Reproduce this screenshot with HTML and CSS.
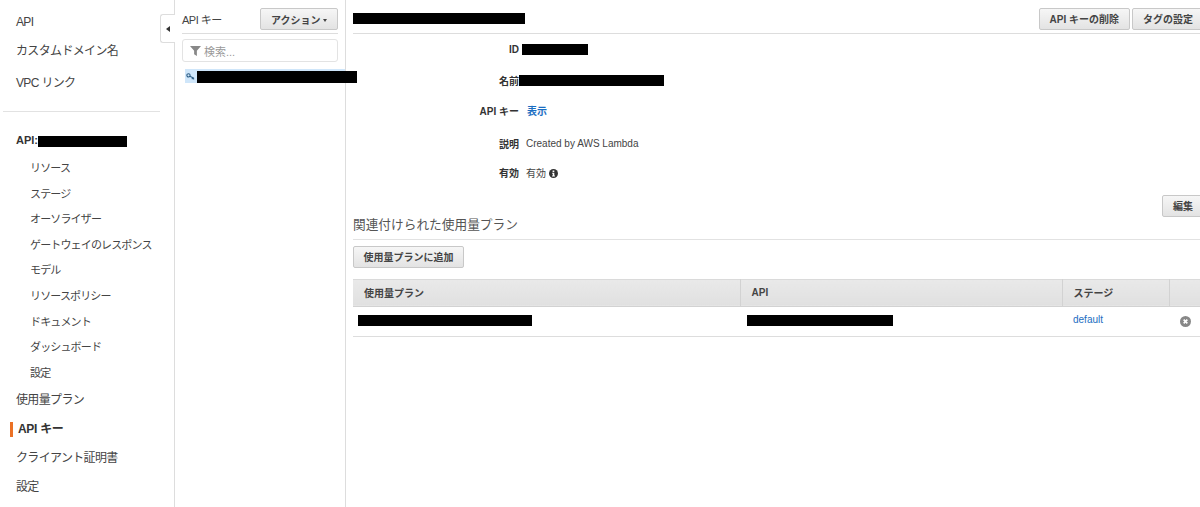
FILE: index.html
```html
<!DOCTYPE html>
<html lang="ja">
<head>
    <meta charset="UTF-8">
    <title>API キー</title>
    <link rel="stylesheet" href="styles.css">
</head>
<body>
    <nav class="sidebar">
        <ul class="nav-top">
            <li>API</li>
            <li>カスタムドメイン名</li>
            <li>VPC リンク</li>
        </ul>
        <hr class="nav-rule">
        <div class="api-name">API:<span class="redact api-redact"></span></div>
        <ul class="nav-sub">
            <li>リソース</li>
            <li>ステージ</li>
            <li>オーソライザー</li>
            <li>ゲートウェイのレスポンス</li>
            <li>モデル</li>
            <li>リソースポリシー</li>
            <li>ドキュメント</li>
            <li>ダッシュボード</li>
            <li>設定</li>
        </ul>
        <ul class="nav-bottom">
            <li>使用量プラン</li>
            <li class="active">API キー</li>
            <li>クライアント証明書</li>
            <li>設定</li>
        </ul>
    </nav>

    <section class="keys">
        <div class="collapse-tab"><span class="arrow-left"></span></div>
        <div class="keys-head">
            <span class="keys-title">API キー</span>
            <button class="btn action-btn">アクション<span class="caret"></span></button>
        </div>
        <div class="search">
            <svg class="filter-icon" viewBox="0 0 12 12"><path d="M0 1h12L7.5 6.3V12L4.500 10V6.300z"/></svg>
            検索...
        </div>
        <div class="key-row">
            <svg class="key-icon" viewBox="0 0 10 8"><circle cx="2.700" cy="2.700" r="1.900"/><path d="M4.200 3.700l4.800 2.400M7 5.100v1.900M8.600 5.900v1.400"/></svg>
            <span class="redact key-redact"></span>
        </div>
    </section>

    <main class="detail">
        <div class="detail-head">
            <span class="redact title-redact"></span>
            <div class="head-btns">
                <button class="btn">API キーの削除</button>
                <button class="btn">タグの設定</button>
            </div>
        </div>

        <dl class="fields">
            <dt>ID</dt>
            <dd><span class="redact id-redact"></span></dd>
            <dt>名前</dt>
            <dd><span class="redact name-redact"></span></dd>
            <dt>API キー</dt>
            <dd><a class="link show-link">表示</a></dd>
            <dt class="field-desc">説明</dt>
            <dd class="field-desc">Created by AWS Lambda</dd>
            <dt>有効</dt>
            <dd>有効 <svg class="info-icon" viewBox="0 0 10 10"><circle cx="5" cy="5" r="5"/><path class="info-mark" d="M4 1.800h1.900v1.500H4zM3.500 4.200h2.400v3h.7V8.400H3.400V7.200h.8V5.300h-.7z"/></svg></dd>
        </dl>

        <div class="edit-row"><button class="btn">編集</button></div>

        <h2 class="plans-title">関連付けられた使用量プラン</h2>
        <button class="btn add-btn">使用量プランに追加</button>

        <table class="plans">
            <thead>
                <tr>
                    <th class="col-plan">使用量プラン</th>
                    <th class="col-api">API</th>
                    <th class="col-stage">ステージ</th>
                    <th></th>
                </tr>
            </thead>
            <tbody>
                <tr>
                    <td class="cell-plan"><span class="redact plan-redact"></span></td>
                    <td class="cell-api"><span class="redact plan-api-redact"></span></td>
                    <td class="cell-stage"><a class="link">default</a></td>
                    <td class="cell-remove">
                        <svg class="remove-icon" viewBox="0 0 12 12"><circle cx="6" cy="6" r="6"/><path d="M4 4l4 4M8 4l-4 4"/></svg>
                    </td>
                </tr>
            </tbody>
        </table>
    </main>
</body>
</html>
```

FILE: styles.css
```css
* {
    box-sizing: border-box;
}

html, body {
    height: 100%;
}

body {
    margin: 0;
    display: flex;
    height: 507px;
    overflow: hidden;
    background: #fff;
    color: #444;
    font-family: "Liberation Sans", "Noto Sans CJK JP", sans-serif;
    font-size: 10px;
}

ul {
    list-style: none;
    margin: 0;
    padding: 0;
}

.redact {
    display: inline-block;
    height: 11px;
    background: #000;
    vertical-align: middle;
}

/* left navigation */
.sidebar {
    flex: 0 0 175px;
    min-width: 0;
    border-right: 1px solid #ddd;
    padding-top: 13px;
    font-size: 12px;
}

.nav-top li {
    height: 19px;
    line-height: 19px;
    padding-left: 16px;
    margin-bottom: 11px;
    letter-spacing: -0.65px;
}

.nav-top li:first-child {
    margin-bottom: 10px;
}

.nav-top li:nth-child(2) {
    margin-bottom: 13px;
}

.nav-rule {
    margin: 18px 14px 0 3px;
    border: 0;
    border-top: 1px solid #e2e2e2;
}

.api-name {
    margin: 20px 0 0 16px;
    height: 17px;
    line-height: 17px;
    font-size: 11px;
    font-weight: bold;
    color: #333;
}

.api-redact {
    width: 89px;
    height: 11px;
}

.nav-sub {
    margin-top: 7px;
}

.nav-sub li {
    height: 25.600px;
    line-height: 25.600px;
    padding-left: 30px;
    font-size: 11px;
    letter-spacing: -0.85px;
}

.nav-bottom li {
    height: 29px;
    line-height: 29px;
    padding-left: 16px;
    letter-spacing: -0.65px;
}

.nav-bottom .active {
    position: relative;
    padding-left: 18px;
    font-weight: bold;
    color: #333;
    letter-spacing: -0.3px;
}

.nav-bottom .active::before {
    content: "";
    position: absolute;
    left: 10px;
    top: 7px;
    width: 3px;
    height: 15px;
    background: #eb7125;
}

/* key list */
.keys {
    position: relative;
    flex: 0 0 171px;
    min-width: 0;
    border-right: 1px solid #ddd;
    padding: 7px 7px 0 7px;
    font-size: 11px;
}

.collapse-tab {
    position: absolute;
    left: -15px;
    top: 14px;
    width: 15px;
    height: 29px;
    background: #fff;
    border: 1px solid #ddd;
    border-right: 0;
    border-radius: 3px 0 0 3px;
    display: flex;
    align-items: center;
    justify-content: center;
}

.arrow-left {
    border: 3px solid transparent;
    border-right: 4px solid #333;
    border-left: 0;
}

.keys-head {
    display: flex;
    justify-content: space-between;
    align-items: center;
    height: 27px;
    padding-bottom: 2px;
    border-bottom: 1px solid #ddd;
}

.keys-title {
    letter-spacing: -0.5px;
}

.btn {
    height: 22px;
    padding: 0 10px;
    border: 1px solid #c8c8c8;
    border-radius: 2px;
    background: linear-gradient(#f6f6f6, #e3e3e3);
    color: #444;
    font: bold 10px "Liberation Sans", "Noto Sans CJK JP", sans-serif;
    white-space: nowrap;
}

.action-btn {
    padding: 0 10.500px;
}

.caret {
    display: inline-block;
    margin-left: 2px;
    vertical-align: middle;
    border: 2.500px solid transparent;
    border-top: 3px solid #444;
    border-bottom: 0;
}

.search {
    display: flex;
    align-items: center;
    gap: 3px;
    height: 23px;
    margin-top: 5px;
    padding-left: 7px;
    border: 1px solid #e3e3e3;
    border-radius: 3px;
    color: #999;
}

.filter-icon {
    width: 11px;
    height: 11px;
    fill: #888;
}

.key-row {
    display: flex;
    align-items: center;
    gap: 2px;
    width: 160px;
    height: 14px;
    margin: 7px -7px 0 3px;
    padding-top: 2px;
    background: #cfe6fa;
}

.key-icon {
    width: 9px;
    height: 7px;
    margin: 0 0 2px 1px;
    fill: none;
    stroke: #2d5d85;
    stroke-width: 1.200;
    flex: none;
}

.key-redact {
    flex: none;
    width: 160px;
    height: 12px;
}

/* detail panel */
.detail {
    flex: 1;
    min-width: 0;
    padding: 0 0 0 7px;
}

.detail-head {
    display: flex;
    justify-content: space-between;
    align-items: center;
    height: 34px;
    padding-top: 4px;
    border-bottom: 1px solid #ddd;
}

.title-redact {
    width: 172px;
    height: 11px;
}

.head-btns {
    display: flex;
    gap: 2px;
    margin-right: -4px;
}

.fields {
    display: grid;
    grid-template-columns: 166px 1fr;
    grid-auto-rows: 30.800px;
    column-gap: 7px;
    align-items: center;
    margin: 0;
}

.fields dt {
    text-align: right;
    font-weight: bold;
    color: #333;
}

.fields dd {
    margin: 0;
}

.fields .field-desc {
    padding-top: 3px;
}

.id-redact {
    width: 66px;
    margin-left: -4px;
}

.name-redact {
    width: 145px;
    margin-left: -7px;
}

.link {
    color: #1b6ec2;
}

.show-link {
    font-weight: bold;
    margin-left: 1px;
}

.info-icon {
    width: 9px;
    height: 9px;
    vertical-align: -1px;
    fill: #333;
}

.info-mark {
    fill: #fff;
}

.edit-row {
    display: flex;
    justify-content: flex-end;
    margin: 7px -4px 0 0;
}

.plans-title {
    margin: -2px 0 0;
    height: 25px;
    line-height: 20px;
    border-bottom: 1px solid #e2e2e2;
    font-size: 12.700px;
    font-weight: normal;
    color: #555;
}

.add-btn {
    display: block;
    margin-top: 6px;
    padding: 0 9.500px;
}

.plans {
    width: 847px;
    margin-top: 11px;
    border-collapse: collapse;
    table-layout: fixed;
}

.plans th {
    height: 27px;
    padding: 0 11px;
    background: linear-gradient(#e9e9e9, #e0e0e0);
    border-top: 1px solid #dadada;
    border-bottom: 1px solid #d2d2d2;
    border-right: 1px solid #d2d2d2;
    text-align: left;
    font-size: 10px;
    color: #444;
}

.plans th:last-child {
    border-right: 0;
}

.col-plan {
    width: 387px;
}

.col-api {
    width: 322px;
}

.col-stage {
    width: 107px;
}

.plans td {
    height: 30px;
    padding: 0 10px 3px;
    border-bottom: 1px solid #ddd;
}

.plans .cell-plan {
    padding-left: 5px;
}

.plans .cell-api {
    padding-left: 7px;
}

.plans .cell-stage {
    padding-left: 11px;
}

.plan-redact {
    width: 174px;
}

.plan-api-redact {
    width: 146px;
}

.plans .cell-remove {
    padding: 0 0 0 11px;
}

.remove-icon {
    display: block;
    width: 11px;
    height: 11px;
    margin-top: 1px;
    fill: #888;
    stroke: #fff;
}

.remove-icon circle {
    stroke: none;
}

.remove-icon path {
    stroke-width: 1.800;
}
```
